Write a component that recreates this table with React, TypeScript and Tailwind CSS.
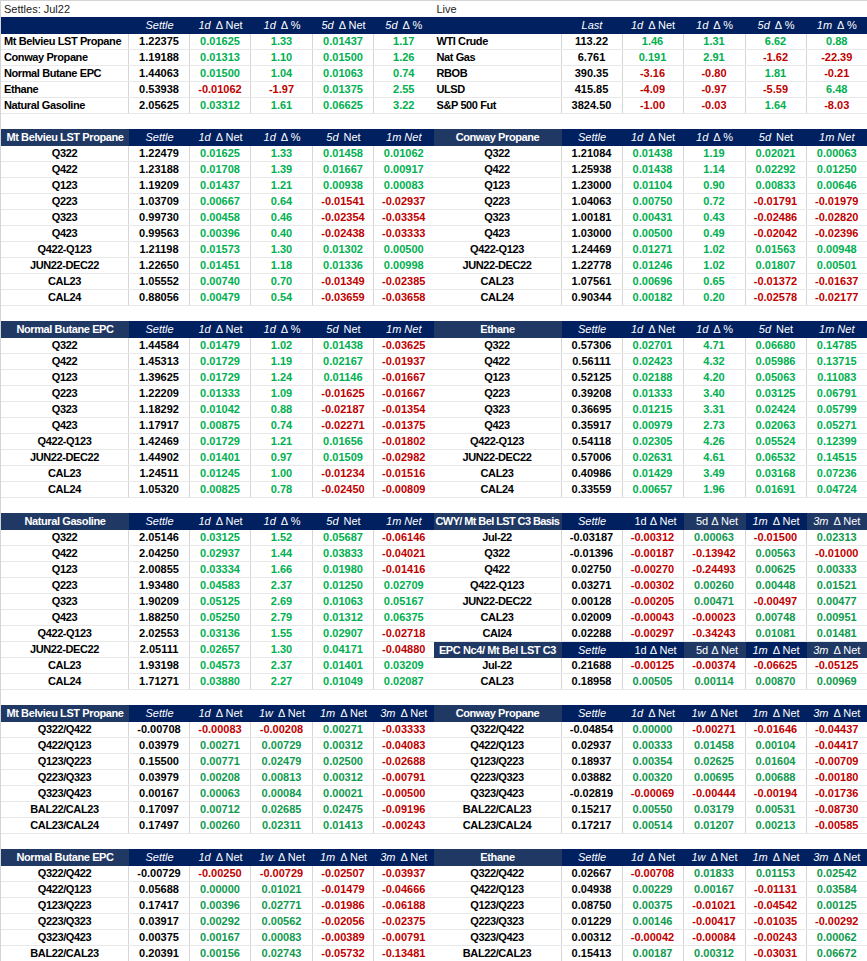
import React from "react"

// header cell spec: [italic part, upright part]
type Head = [string, string]
type Row = string[]

const NET_PCT: Head[] = [["Settle", ""], ["1d", "Δ Net"], ["1d", "Δ %"], ["5d", "Net"], ["1m Net", ""]]
const SPREAD: Head[] = [["Settle", ""], ["1d", "Δ Net"], ["1w", "Δ Net"], ["1m", "Δ Net"], ["3m", "Δ Net"]]

const GRID = "grid grid-cols-[128px_61px_61px_62px_61px_1fr]"

const topLeft: Row[] = [
    ["Mt Belvieu LST Propane", "1.22375", "0.01625", "1.33", "0.01437", "1.17"],
    ["Conway Propane", "1.19188", "0.01313", "1.10", "0.01500", "1.26"],
    ["Normal Butane EPC", "1.44063", "0.01500", "1.04", "0.01063", "0.74"],
    ["Ethane", "0.53938", "-0.01062", "-1.97", "0.01375", "2.55"],
    ["Natural Gasoline", "2.05625", "0.03312", "1.61", "0.06625", "3.22"],
]

const topRight: Row[] = [
    ["WTI Crude", "113.22", "1.46", "1.31", "6.62", "0.88"],
    ["Nat Gas", "6.761", "0.191", "2.91", "-1.62", "-22.39"],
    ["RBOB", "390.35", "-3.16", "-0.80", "1.81", "-0.21"],
    ["ULSD", "415.85", "-4.09", "-0.97", "-5.59", "6.48"],
    ["S&P 500 Fut", "3824.50", "-1.00", "-0.03", "1.64", "-8.03"],
]

const mtBel: Row[] = [
    ["Q322", "1.22479", "0.01625", "1.33", "0.01458", "0.01062"],
    ["Q422", "1.23188", "0.01708", "1.39", "0.01667", "0.00917"],
    ["Q123", "1.19209", "0.01437", "1.21", "0.00938", "0.00083"],
    ["Q223", "1.03709", "0.00667", "0.64", "-0.01541", "-0.02937"],
    ["Q323", "0.99730", "0.00458", "0.46", "-0.02354", "-0.03354"],
    ["Q423", "0.99563", "0.00396", "0.40", "-0.02438", "-0.03333"],
    ["Q422-Q123", "1.21198", "0.01573", "1.30", "0.01302", "0.00500"],
    ["JUN22-DEC22", "1.22650", "0.01451", "1.18", "0.01336", "0.00998"],
    ["CAL23", "1.05552", "0.00740", "0.70", "-0.01349", "-0.02385"],
    ["CAL24", "0.88056", "0.00479", "0.54", "-0.03659", "-0.03658"],
]

const conway: Row[] = [
    ["Q322", "1.21084", "0.01438", "1.19", "0.02021", "0.00063"],
    ["Q422", "1.25938", "0.01438", "1.14", "0.02292", "0.01250"],
    ["Q123", "1.23000", "0.01104", "0.90", "0.00833", "0.00646"],
    ["Q223", "1.04063", "0.00750", "0.72", "-0.01791", "-0.01979"],
    ["Q323", "1.00181", "0.00431", "0.43", "-0.02486", "-0.02820"],
    ["Q423", "1.03000", "0.00500", "0.49", "-0.02042", "-0.02396"],
    ["Q422-Q123", "1.24469", "0.01271", "1.02", "0.01563", "0.00948"],
    ["JUN22-DEC22", "1.22778", "0.01246", "1.02", "0.01807", "0.00501"],
    ["CAL23", "1.07561", "0.00696", "0.65", "-0.01372", "-0.01637"],
    ["CAL24", "0.90344", "0.00182", "0.20", "-0.02578", "-0.02177"],
]

const butane: Row[] = [
    ["Q322", "1.44584", "0.01479", "1.02", "0.01438", "-0.03625"],
    ["Q422", "1.45313", "0.01729", "1.19", "0.02167", "-0.01937"],
    ["Q123", "1.39625", "0.01729", "1.24", "0.01146", "-0.01667"],
    ["Q223", "1.22209", "0.01333", "1.09", "-0.01625", "-0.01667"],
    ["Q323", "1.18292", "0.01042", "0.88", "-0.02187", "-0.01354"],
    ["Q423", "1.17917", "0.00875", "0.74", "-0.02271", "-0.01375"],
    ["Q422-Q123", "1.42469", "0.01729", "1.21", "0.01656", "-0.01802"],
    ["JUN22-DEC22", "1.44902", "0.01401", "0.97", "0.01509", "-0.02982"],
    ["CAL23", "1.24511", "0.01245", "1.00", "-0.01234", "-0.01516"],
    ["CAL24", "1.05320", "0.00825", "0.78", "-0.02450", "-0.00809"],
]

const ethane: Row[] = [
    ["Q322", "0.57306", "0.02701", "4.71", "0.06680", "0.14785"],
    ["Q422", "0.56111", "0.02423", "4.32", "0.05986", "0.13715"],
    ["Q123", "0.52125", "0.02188", "4.20", "0.05063", "0.11083"],
    ["Q223", "0.39208", "0.01333", "3.40", "0.03125", "0.06791"],
    ["Q323", "0.36695", "0.01215", "3.31", "0.02424", "0.05799"],
    ["Q423", "0.35917", "0.00979", "2.73", "0.02063", "0.05271"],
    ["Q422-Q123", "0.54118", "0.02305", "4.26", "0.05524", "0.12399"],
    ["JUN22-DEC22", "0.57006", "0.02631", "4.61", "0.06532", "0.14515"],
    ["CAL23", "0.40986", "0.01429", "3.49", "0.03168", "0.07236"],
    ["CAL24", "0.33559", "0.00657", "1.96", "0.01691", "0.04724"],
]

const natGas: Row[] = [
    ["Q322", "2.05146", "0.03125", "1.52", "0.05687", "-0.06146"],
    ["Q422", "2.04250", "0.02937", "1.44", "0.03833", "-0.04021"],
    ["Q123", "2.00855", "0.03334", "1.66", "0.01980", "-0.01416"],
    ["Q223", "1.93480", "0.04583", "2.37", "0.01250", "0.02709"],
    ["Q323", "1.90209", "0.05125", "2.69", "0.01063", "0.05167"],
    ["Q423", "1.88250", "0.05250", "2.79", "0.01312", "0.06375"],
    ["Q422-Q123", "2.02553", "0.03136", "1.55", "0.02907", "-0.02718"],
    ["JUN22-DEC22", "2.05111", "0.02657", "1.30", "0.04171", "-0.04880"],
    ["CAL23", "1.93198", "0.04573", "2.37", "0.01401", "0.03209"],
    ["CAL24", "1.71271", "0.03880", "2.27", "0.01049", "0.02087"],
]

const cwyBasis: Row[] = [
    ["Jul-22", "-0.03187", "-0.00312", "0.00063", "-0.01500", "0.02313"],
    ["Q322", "-0.01396", "-0.00187", "-0.13942", "0.00563", "-0.01000"],
    ["Q422", "0.02750", "-0.00270", "-0.24493", "0.00625", "0.00333"],
    ["Q422-Q123", "0.03271", "-0.00302", "0.00260", "0.00448", "0.01521"],
    ["JUN22-DEC22", "0.00128", "-0.00205", "0.00471", "-0.00497", "0.00477"],
    ["CAL23", "0.02009", "-0.00043", "-0.00023", "0.00748", "0.00951"],
    ["CAl24", "0.02288", "-0.00297", "-0.34243", "0.01081", "0.01481"],
]

const epcBasis: Row[] = [
    ["Jul-22", "0.21688", "-0.00125", "-0.00374", "-0.06625", "-0.05125"],
    ["CAL23", "0.18958", "0.00505", "0.00114", "0.00870", "0.00969"],
]

const mtBelSpread: Row[] = [
    ["Q322/Q422", "-0.00708", "-0.00083", "-0.00208", "0.00271", "-0.03333"],
    ["Q422/Q123", "0.03979", "0.00271", "0.00729", "0.00312", "-0.04083"],
    ["Q123/Q223", "0.15500", "0.00771", "0.02479", "0.02500", "-0.02688"],
    ["Q223/Q323", "0.03979", "0.00208", "0.00813", "0.00312", "-0.00791"],
    ["Q323/Q423", "0.00167", "0.00063", "0.00084", "0.00021", "-0.00500"],
    ["BAL22/CAL23", "0.17097", "0.00712", "0.02685", "0.02475", "-0.09196"],
    ["CAL23/CAL24", "0.17497", "0.00260", "0.02311", "0.01413", "-0.00243"],
]

const conwaySpread: Row[] = [
    ["Q322/Q422", "-0.04854", "0.00000", "-0.00271", "-0.01646", "-0.04437"],
    ["Q422/Q123", "0.02937", "0.00333", "0.01458", "0.00104", "-0.04417"],
    ["Q123/Q223", "0.18937", "0.00354", "0.02625", "0.01604", "-0.00709"],
    ["Q223/Q323", "0.03882", "0.00320", "0.00695", "0.00688", "-0.00180"],
    ["Q323/Q423", "-0.02819", "-0.00069", "-0.00444", "-0.00194", "-0.01736"],
    ["BAL22/CAL23", "0.15217", "0.00550", "0.03179", "0.00531", "-0.08730"],
    ["CAL23/CAL24", "0.17217", "0.00514", "0.01207", "0.00213", "-0.00585"],
]

const butaneSpread: Row[] = [
    ["Q322/Q422", "-0.00729", "-0.00250", "-0.00729", "-0.02507", "-0.03937"],
    ["Q422/Q123", "0.05688", "0.00000", "0.01021", "-0.01479", "-0.04666"],
    ["Q123/Q223", "0.17417", "0.00396", "0.02771", "-0.01986", "-0.06188"],
    ["Q223/Q323", "0.03917", "0.00292", "0.00562", "-0.02056", "-0.02375"],
    ["Q323/Q423", "0.00375", "0.00167", "0.00083", "-0.00389", "-0.00791"],
    ["BAL22/CAL23", "0.20391", "0.00156", "0.02743", "-0.05732", "-0.13481"],
]

const ethaneSpread: Row[] = [
    ["Q322/Q422", "0.02667", "-0.00708", "0.01833", "0.01153", "0.02542"],
    ["Q422/Q123", "0.04938", "0.00229", "0.00167", "-0.01131", "0.03584"],
    ["Q123/Q223", "0.08750", "0.00375", "-0.01021", "-0.04542", "0.00125"],
    ["Q223/Q323", "0.01229", "0.00146", "-0.00417", "-0.01035", "-0.00292"],
    ["Q323/Q423", "0.00312", "-0.00042", "-0.00084", "-0.00243", "0.00062"],
    ["BAL22/CAL23", "0.15413", "0.00187", "0.00312", "-0.03031", "0.06672"],
]

function valueColor(v: string, deep: boolean) {
    if (v.startsWith("-")) return "text-[#c00000]"
    return deep ? "text-[#109a4e]" : "text-[#00b050]"
}

function HeadText({ h }: { h: Head }) {
    return (
        <span className="whitespace-nowrap">
            <i>{h[0]}</i>
            {h[1] && <span className="ml-[5px]">{h[1]}</span>}
        </span>
    )
}

function HeaderRow({
    title,
    heads,
    shades,
    tall = true,
    alignLeft = false,
}: {
    title: string
    heads: Head[]
    shades?: boolean[]
    tall?: boolean
    alignLeft?: boolean
}) {
    return (
        <div className={`${GRID} ${tall ? "h-[17px]" : "h-4"} text-white text-[11px]`}>
            <div
                className={`bg-[#203864] font-bold flex items-center whitespace-nowrap ${alignLeft ? "justify-start pl-[2px] tracking-[-0.6px]" : "justify-center tracking-[-0.4px]"}`}
            >
                {title}
            </div>
            {heads.map((h, i) => (
                <div
                    key={i}
                    className={`flex items-center justify-center ${shades && shades[i] ? "bg-[#203864]" : "bg-[#002060]"}`}
                >
                    <HeadText h={h} />
                </div>
            ))}
        </div>
    )
}

function DataRow({ row, deep, leftLabel = false }: { row: Row; deep: boolean; leftLabel?: boolean }) {
    return (
        <div className={`${GRID} h-4 border-b border-[#e8e8e8] text-[11px] font-bold`}>
            <div
                className={`flex items-center tracking-[-0.4px] text-black border-r border-[#d6d6d6] whitespace-nowrap ${leftLabel ? "justify-start pl-[3px]" : "justify-center"}`}
            >
                {row[0]}
            </div>
            <div className="flex items-center justify-center text-black border-r border-[#d6d6d6]">{row[1]}</div>
            {row.slice(2).map((v, i) => (
                <div
                    key={i}
                    className={`flex items-center justify-center ${valueColor(v, deep)} ${i < 3 ? "border-r border-[#d6d6d6]" : ""}`}
                >
                    {v}
                </div>
            ))}
        </div>
    )
}

function Section({ title, heads, rows, deep = false }: { title: string; heads: Head[]; rows: Row[]; deep?: boolean }) {
    return (
        <div className="flex flex-col">
            <HeaderRow title={title} heads={heads} />
            {rows.map((r, i) => (
                <DataRow key={i} row={r} deep={deep} />
            ))}
        </div>
    )
}

function TopTable({ caption, heads, rows }: { caption: string; heads: Head[]; rows: Row[] }) {
    return (
        <div className="flex flex-col">
            <div className="h-4 flex items-center pl-[3px] text-[11px] text-[#1a1a1a]">{caption}</div>
            <div className={`${GRID} h-[17px] bg-[#002060] text-white text-[11px]`}>
                <div />
                {heads.map((h, i) => (
                    <div key={i} className="flex items-center justify-center">
                        <HeadText h={h} />
                    </div>
                ))}
            </div>
            {rows.map((r, i) => (
                <DataRow key={i} row={r} deep={false} leftLabel />
            ))}
        </div>
    )
}

const BASIS_HEADS: Head[] = [["Settle", ""], ["", "1d Δ Net"], ["", "5d Δ Net"], ["1m", "Δ Net"], ["3m", "Δ Net"]]
const BASIS_SHADES = [false, false, true, false, true]

export default function App() {
    return (
        <div className="w-[867px] h-[961px] overflow-hidden bg-white border-t border-l border-[#d4d4d4] font-['Liberation_Sans',Arial,sans-serif] leading-none">
            <div className="flex">
                <div className="w-[433px]">
                    <TopTable
                        caption="Settles: Jul22"
                        heads={[["Settle", ""], ["1d", "Δ Net"], ["1d", "Δ %"], ["5d", "Δ Net"], ["5d", "Δ %"]]}
                        rows={topLeft}
                    />
                </div>
                <div className="w-[434px]">
                    <TopTable
                        caption="Live"
                        heads={[["Last", ""], ["1d", "Δ Net"], ["1d", "Δ %"], ["5d", "Δ %"], ["1m", "Δ %"]]}
                        rows={topRight}
                    />
                </div>
            </div>

            <div className="flex mt-[15px]">
                <div className="w-[433px]">
                    <Section title="Mt Belvieu LST Propane" heads={NET_PCT} rows={mtBel} />
                </div>
                <div className="w-[434px]">
                    <Section title="Conway Propane" heads={NET_PCT} rows={conway} />
                </div>
            </div>

            <div className="flex mt-[15px]">
                <div className="w-[433px]">
                    <Section title="Normal Butane EPC" heads={NET_PCT} rows={butane} />
                </div>
                <div className="w-[434px]">
                    <Section title="Ethane" heads={NET_PCT} rows={ethane} />
                </div>
            </div>

            <div className="flex mt-[15px]">
                <div className="w-[433px]">
                    <Section title="Natural Gasoline" heads={NET_PCT} rows={natGas} />
                </div>
                <div className="w-[434px] flex flex-col">
                    <HeaderRow title="CWY/ Mt Bel LST C3 Basis" heads={BASIS_HEADS} shades={BASIS_SHADES} alignLeft />
                    {cwyBasis.map((r, i) => (
                        <DataRow key={i} row={r} deep />
                    ))}
                    <HeaderRow title="EPC Nc4/ Mt Bel LST C3" heads={BASIS_HEADS} shades={BASIS_SHADES} tall={false} />
                    {epcBasis.map((r, i) => (
                        <DataRow key={i} row={r} deep />
                    ))}
                </div>
            </div>

            <div className="flex mt-[15px]">
                <div className="w-[433px]">
                    <Section title="Mt Belvieu LST Propane" heads={SPREAD} rows={mtBelSpread} deep />
                </div>
                <div className="w-[434px]">
                    <Section title="Conway Propane" heads={SPREAD} rows={conwaySpread} deep />
                </div>
            </div>

            <div className="flex mt-[15px]">
                <div className="w-[433px]">
                    <Section title="Normal Butane EPC" heads={SPREAD} rows={butaneSpread} deep />
                </div>
                <div className="w-[434px]">
                    <Section title="Ethane" heads={SPREAD} rows={ethaneSpread} deep />
                </div>
            </div>
        </div>
    )
}
